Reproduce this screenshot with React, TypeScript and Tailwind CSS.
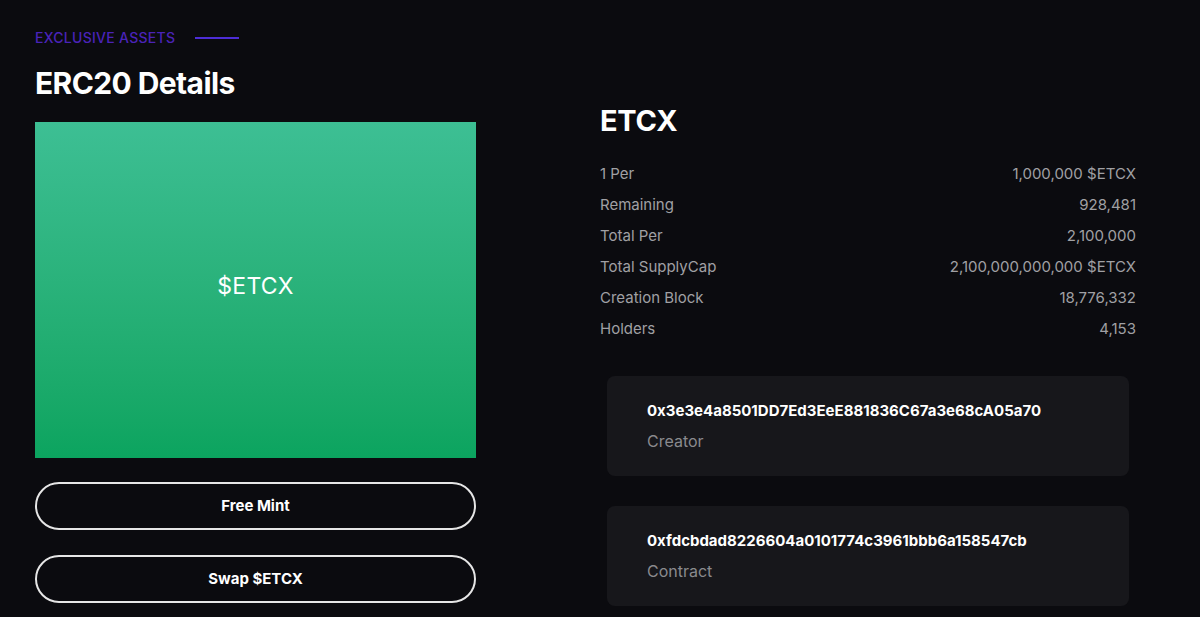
import React from "react";

const stats: [string, string][] = [
  ["1 Per", "1,000,000 $ETCX"],
  ["Remaining", "928,481"],
  ["Total Per", "2,100,000"],
  ["Total SupplyCap", "2,100,000,000,000 $ETCX"],
  ["Creation Block", "18,776,332"],
  ["Holders", "4,153"],
];

const addresses: [string, string][] = [
  ["0x3e3e4a8501DD7Ed3EeE881836C67a3e68cA05a70", "Creator"],
  ["0xfdcbdad8226604a0101774c3961bbb6a158547cb", "Contract"],
];

export default function App() {
  return (
    <div
      className="min-h-[617px] w-full overflow-hidden bg-[#0b0b0f] text-white"
      style={{ fontFamily: "Inter, 'Open Sans', 'Noto Sans', sans-serif" }}
    >
      <div className="flex px-[35px] pt-[28px]">
        {/* left column */}
        <div className="flex w-[441px] shrink-0 flex-col">
          <div className="flex h-[20px] items-center gap-[20px]">
            <span className="text-[14px] font-medium uppercase leading-none tracking-[0.02em] text-[#4a23b8]">
              Exclusive Assets
            </span>
            <span className="h-[2px] w-[44px] bg-[#4d2dd6]" />
          </div>
          <h1 className="mt-[15px] text-[30px] font-bold leading-[40px] tracking-[-0.02em]">
            ERC20 Details
          </h1>
          <div className="mt-[19px] flex h-[336px] items-center justify-center bg-gradient-to-b from-[#3dbf94] to-[#0ba45f] pb-[8px]">
            <span className="text-[23px] font-normal tracking-[0.01em]">$ETCX</span>
          </div>
          <button className="mt-[24px] h-[48px] rounded-full border-2 border-[#e6e6e6] text-[15px] font-bold">
            Free Mint
          </button>
          <button className="mt-[25px] h-[48px] rounded-full border-2 border-[#e6e6e6] text-[15px] font-bold">
            Swap $ETCX
          </button>
        </div>

        {/* right column */}
        <div className="ml-[124px] flex w-[536px] flex-col pt-[73px]">
          <h2 className="text-[29px] font-bold leading-[40px] tracking-[-0.01em]">ETCX</h2>
          <div className="mt-[18px] flex flex-col">
            {stats.map(([k, v]) => (
              <div key={k} className="flex h-[31px] items-center justify-between text-[15px] text-[#a0a0a4]">
                <span>{k}</span>
                <span>{v}</span>
              </div>
            ))}
          </div>
          <div className="mt-[31px] flex flex-col gap-[30px] px-[7px]">
            {addresses.map(([addr, role]) => (
              <div key={role} className="flex h-[100px] flex-col justify-center rounded-[8px] bg-[#17171b] px-[40px]">
                <span className="text-[15px] font-bold leading-[22px]">{addr}</span>
                <span className="mt-[8px] text-[16px] leading-[22px] text-[#8a8a8e]">{role}</span>
              </div>
            ))}
          </div>
        </div>
      </div>
    </div>
  );
}
